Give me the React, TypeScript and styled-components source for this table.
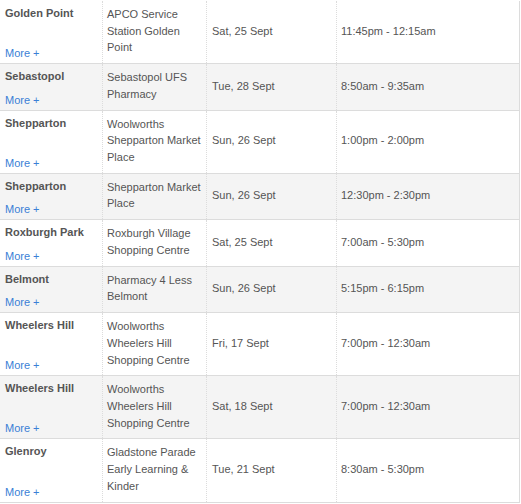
import React from "react";
import styled, { createGlobalStyle } from "styled-components";

const GlobalStyle = createGlobalStyle`
  html, body {
    margin: 0;
    padding: 0;
    background: #fff;
  }
  body {
    font-family: "Liberation Sans", Arial, Helvetica, sans-serif;
    font-size: 11px;
    color: #555;
  }
`;

interface Session {
  city: string;
  venue: string;
  date: string;
  time: string;
}

const sessions: Session[] = [
  { city: "Golden Point", venue: "APCO Service Station Golden Point", date: "Sat, 25 Sept", time: "11:45pm - 12:15am" },
  { city: "Sebastopol", venue: "Sebastopol UFS Pharmacy", date: "Tue, 28 Sept", time: "8:50am - 9:35am" },
  { city: "Shepparton", venue: "Woolworths Shepparton Market Place", date: "Sun, 26 Sept", time: "1:00pm - 2:00pm" },
  { city: "Shepparton", venue: "Shepparton Market Place", date: "Sun, 26 Sept", time: "12:30pm - 2:30pm" },
  { city: "Roxburgh Park", venue: "Roxburgh Village Shopping Centre", date: "Sat, 25 Sept", time: "7:00am - 5:30pm" },
  { city: "Belmont", venue: "Pharmacy 4 Less Belmont", date: "Sun, 26 Sept", time: "5:15pm - 6:15pm" },
  { city: "Wheelers Hill", venue: "Woolworths Wheelers Hill Shopping Centre", date: "Fri, 17 Sept", time: "7:00pm - 12:30am" },
  { city: "Wheelers Hill", venue: "Woolworths Wheelers Hill Shopping Centre", date: "Sat, 18 Sept", time: "7:00pm - 12:30am" },
  { city: "Glenroy", venue: "Gladstone Parade Early Learning & Kinder", date: "Tue, 21 Sept", time: "8:30am - 5:30pm" },
];

export default function App(): JSX.Element {
  return (
    <>
      <GlobalStyle />
      <Table>
        {sessions.map((s, i) => (
          <Row key={i} striped={i % 2 === 1}>
            <CityCell>
              <City>{s.city}</City>
              <More href="#">More +</More>
            </CityCell>
            <Cell>{s.venue}</Cell>
            <Cell centered>{s.date}</Cell>
            <Cell centered last>{s.time}</Cell>
          </Row>
        ))}
      </Table>
    </>
  );
}

const Table = styled.div`
  width: 520px;
  padding-top: 1px;
`;

const Row = styled.div<{ striped: boolean }>`
  display: grid;
  grid-template-columns: 103px 104px 130px 183px;
  background: ${(p) => (p.striped ? "#f4f4f4" : "#fff")};
  border-bottom: 1px solid #dcdcdc;
`;

const Cell = styled.div<{ centered?: boolean; last?: boolean }>`
  padding: 5px 4px 7px ${(p) => (p.centered && !p.last ? "5px" : "4px")};
  line-height: 16.72px;
  border-right: 1px ${(p) => (p.last ? "solid" : "dotted")} #dcdcdc;
  display: flex;
  align-items: ${(p) => (p.centered ? "center" : "flex-start")};
`;

const CityCell = styled.div`
  padding: 5px 4px 4px 5px;
  border-right: 1px dotted #dcdcdc;
  display: flex;
  flex-direction: column;
  justify-content: space-between;
`;

const City = styled.div`
  font-weight: bold;
  line-height: 14px;
`;

const More = styled.a`
  color: #3a7fd6;
  text-decoration: none;
  line-height: 12px;
`;
